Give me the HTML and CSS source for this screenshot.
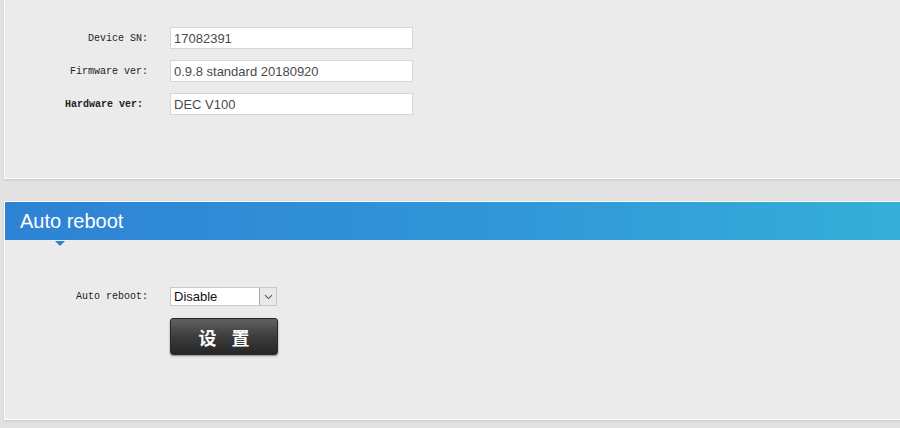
FILE: index.html
```html
<!DOCTYPE html>
<html lang="en">
<head>
    <meta charset="utf-8">
    <title>Device info</title>
    <link rel="stylesheet" href="styles.css">
</head>
<body>
    <div class="panel panel-info">
        <div class="form-row">
            <label>Device SN:</label>
            <input class="field" type="text" value="17082391" readonly>
        </div>
        <div class="form-row">
            <label>Firmware ver:</label>
            <input class="field" type="text" value="0.9.8 standard 20180920" readonly>
        </div>
        <div class="form-row">
            <label class="label-hw">Hardware ver:</label>
            <input class="field" type="text" value="DEC V100" readonly>
        </div>
    </div>

    <div class="panel panel-reboot">
        <h2 class="panel-title">Auto reboot</h2>
        <div class="panel-body">
            <div class="form-row">
                <label>Auto reboot:</label>
                <div class="select-box">
                    <select class="select">
                        <option>Disable</option>
                        <option>Enable</option>
                    </select>
                    <span class="select-arrow">
                        <svg width="9" height="6" viewBox="0 0 9 6"><path d="M1 1.2 L4.5 4.6 L8 1.2" fill="none" stroke="#555" stroke-width="1.1"/></svg>
                    </span>
                </div>
            </div>
            <div class="form-row row-button">
                <span class="spacer"></span>
                <button class="btn-set">设置</button>
            </div>
        </div>
    </div>
</body>
</html>
```

FILE: styles.css
```css
html, body {
    margin: 0;
    padding: 0;
}
body {
    background: #e2e2e3;
    font-family: "Liberation Sans", Arial, sans-serif;
    overflow: hidden;
    width: 900px;
    height: 428px;
}
.panel {
    background: #ebebec;
    border: 1px solid #ffffff;
    margin-left: 4px;
    margin-right: -20px;
    box-shadow: 0 1px 2px rgba(0, 0, 0, 0.12);
}
.panel-info {
    border-top: 0;
    padding-top: 27px;
    box-sizing: border-box;
    height: 179px;
}
.form-row {
    display: flex;
    align-items: center;
    margin-bottom: 11px;
}
.form-row label {
    width: 143px;
    margin-right: 22px;
    text-align: right;
    font-family: "Liberation Mono", "Courier New", monospace;
    font-size: 10px;
    color: #222;
}
.form-row .label-hw {
    width: 138px;
    margin-right: 27px;
    font-weight: bold;
}
.field {
    width: 243px;
    height: 22px;
    box-sizing: border-box;
    border: 1px solid #d6d6d6;
    background: #fff;
    padding: 0 0 0 3px;
    margin: 0;
    font-family: "Liberation Sans", Arial, sans-serif;
    font-size: 13px;
    color: #4a4a4a;
    outline: none;
}
.panel-reboot {
    margin-top: 22px;
    height: 219px;
    box-sizing: border-box;
}
.panel-title {
    position: relative;
    margin: 0;
    height: 38px;
    line-height: 38px;
    padding-left: 15px;
    font-size: 20px;
    font-weight: normal;
    color: #fff;
    background: linear-gradient(to right, #2e82d4, #3197d8 55%, #35b0d8);
    border-bottom: 1px solid #e6f0f8;
}
.panel-title::after {
    content: "";
    position: absolute;
    left: 50px;
    bottom: -6px;
    border-left: 5px solid transparent;
    border-right: 5px solid transparent;
    border-top: 5px solid #2d80cf;
}
.panel-body {
    padding-top: 46px;
}
.select-box {
    display: flex;
    width: 107px;
    height: 19px;
    box-sizing: border-box;
    border: 1px solid #c8c8c8;
    background: #fff;
}
.select {
    flex: 1;
    appearance: none;
    -webkit-appearance: none;
    border: 0;
    background: transparent;
    padding: 0 0 0 3px;
    margin: 0;
    font-family: "Liberation Sans", Arial, sans-serif;
    font-size: 13px;
    color: #111;
    outline: none;
}
.select-arrow {
    width: 16px;
    display: flex;
    align-items: center;
    justify-content: center;
    background: #e9e9e9;
    border-left: 1px solid #a9a9a9;
}
.row-button {
    margin-top: 12px;
}
.spacer {
    width: 165px;
}
.btn-set {
    width: 108px;
    height: 37px;
    padding: 0 0 0 15px;
    border: 1px solid #2a2a2a;
    border-radius: 3px;
    background: linear-gradient(#606060, #3a3a3a 55%, #262626);
    box-shadow: 0 1px 2px rgba(0, 0, 0, 0.45);
    color: #fff;
    font-family: "Noto Sans CJK SC", sans-serif;
    font-weight: bold;
    font-size: 18px;
    letter-spacing: 15px;
    cursor: pointer;
}
.btn-set:hover {
    background: linear-gradient(#6a6a6a, #444 55%, #2e2e2e);
}
```
